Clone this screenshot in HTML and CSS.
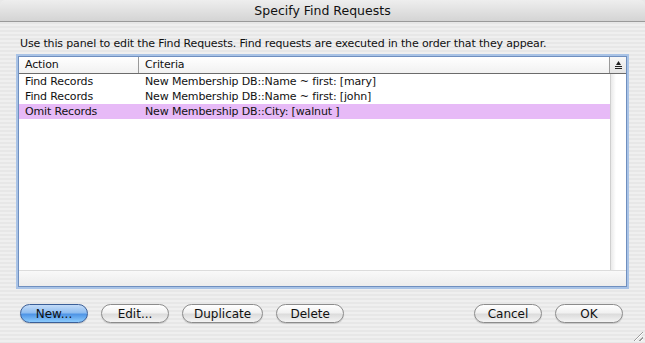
FILE: index.html
```html
<!DOCTYPE html>
<html lang="en">
  <head>
    <meta charset="UTF-8" />
    <title>Specify Find Requests</title>
    <link rel="stylesheet" href="styles.css">
  </head>
  <body>
    <div class="window">
      <div class="titlebar">Specify Find Requests</div>
      <div class="content">
        <p class="intro">Use this panel to edit the Find Requests. Find requests are executed in the order that they appear.</p>

        <div class="list">
          <div class="list-head">
            <div class="col-action">Action</div>
            <div class="col-criteria">Criteria</div>
            <div class="col-corner">
              <svg width="9" height="10" viewBox="0 0 9 10">
                <path d="M4.5 1 L7 5 L2 5 Z" fill="#222" />
                <rect x="1" y="6" width="7" height="1" fill="#222" />
                <rect x="1" y="8" width="7" height="1" fill="#222" />
              </svg>
            </div>
          </div>
          <div class="list-body">
            <div class="rows">
              <div class="row">
                <span class="col-action">Find Records</span>
                <span class="col-criteria">New Membership DB::Name ~ first: [mary]</span>
              </div>
              <div class="row">
                <span class="col-action">Find Records</span>
                <span class="col-criteria">New Membership DB::Name ~ first: [john]</span>
              </div>
              <div class="row selected">
                <span class="col-action">Omit Records</span>
                <span class="col-criteria">New Membership DB::City: [walnut ]</span>
              </div>
            </div>
            <div class="vscroll"></div>
          </div>
          <div class="hscroll"></div>
        </div>

        <div class="buttons">
          <div class="group">
            <button class="btn default">New...</button>
            <button class="btn">Edit...</button>
            <button class="btn">Duplicate</button>
            <button class="btn">Delete</button>
          </div>
          <div class="group">
            <button class="btn">Cancel</button>
            <button class="btn">OK</button>
          </div>
        </div>
      </div>
      <div class="grip"></div>
    </div>
  </body>
</html>
```

FILE: styles.css
```css
body {
  margin: 0;
  font-family: "DejaVu Sans", sans-serif;
  background: #e9e9e9;
}
.window {
  position: relative;
  width: 645px;
  height: 343px;
  overflow: hidden;
  border-radius: 6px 6px 0 0;
  background: repeating-linear-gradient(#efefef 0 2px, #e7e7e7 2px 4px);
}
.titlebar {
  height: 21px;
  line-height: 22px;
  text-align: center;
  font-size: 12.5px;
  color: #111;
  background: linear-gradient(#eeeeee, #d4d4d4);
  border-bottom: 1px solid #9a9a9a;
}
.content {
  padding: 15px 18px 0 17px;
}
.intro {
  margin: 0 0 5px 3px;
  font-size: 11px;
  line-height: 14px;
  letter-spacing: -0.15px;
  color: #111;
}
.list {
  height: 231px;
  box-sizing: border-box;
  border: 1px solid #6f8fbf;
  box-shadow: 0 0 0 2px #a9c3e6;
  margin-left: 1px;
  background: #fff;
  font-size: 11px;
  letter-spacing: -0.15px;
  color: #111;
  display: flex;
  flex-direction: column;
}
.list-head {
  display: flex;
  height: 16px;
  line-height: 16px;
  border-bottom: 1px solid #6b6b6b;
  background: linear-gradient(#ffffff, #f1f1f1);
}
.col-action {
  width: 120px;
  box-sizing: border-box;
  padding-left: 6px;
  flex: none;
}
.col-criteria {
  flex: 1;
  padding-left: 6px;
  white-space: nowrap;
}
.list-head .col-action {
  border-right: 1px solid #9a9a9a;
}
.list-head .col-criteria {
  border-right: 1px solid #9a9a9a;
}
.col-corner {
  width: 16px;
  display: flex;
  align-items: center;
  justify-content: center;
  background: linear-gradient(#f7f7f7, #e4e4e4);
}
.list-body {
  flex: 1;
  display: flex;
}
.rows {
  flex: 1;
}
.row {
  display: flex;
  height: 15px;
  line-height: 15px;
}
.row.selected {
  background: #e7baf7;
}
.vscroll {
  width: 16px;
  border-left: 1px solid #cfcfcf;
  box-sizing: border-box;
  background: linear-gradient(90deg, #e9e9e9, #ffffff 5px);
}
.hscroll {
  height: 15px;
  border-top: 1px solid #dcdcdc;
  background: linear-gradient(#f9f9f9, #ececec);
}
.buttons {
  display: flex;
  justify-content: space-between;
  margin-top: 17px;
  padding: 0 4px 0 3px;
}
.group {
  display: flex;
  gap: 13px;
}
.btn {
  font-family: "DejaVu Sans", sans-serif;
  font-size: 12px;
  height: 19px;
  min-width: 68px;
  padding: 0 11px;
  border: 1px solid #8c8c8c;
  border-radius: 10px;
  color: #111;
  background: linear-gradient(#ffffff 0%, #f1f1f1 45%, #dcdcdc 55%, #f4f4f4 100%);
  box-shadow: 0 1px 1px rgba(0, 0, 0, 0.15);
}
.btn.default {
  border-color: #3b5f98;
  background: linear-gradient(#c4dcf8 0%, #8fbdf0 45%, #4f95e6 55%, #8ccbfd 100%);
}
.grip {
  position: absolute;
  right: 2px;
  bottom: 2px;
  width: 12px;
  height: 12px;
  background: repeating-linear-gradient(135deg, transparent 0 2px, #9b9b9b 2px 3px, #ffffff 3px 4px);
  clip-path: polygon(100% 0, 100% 100%, 0 100%);
}
```
